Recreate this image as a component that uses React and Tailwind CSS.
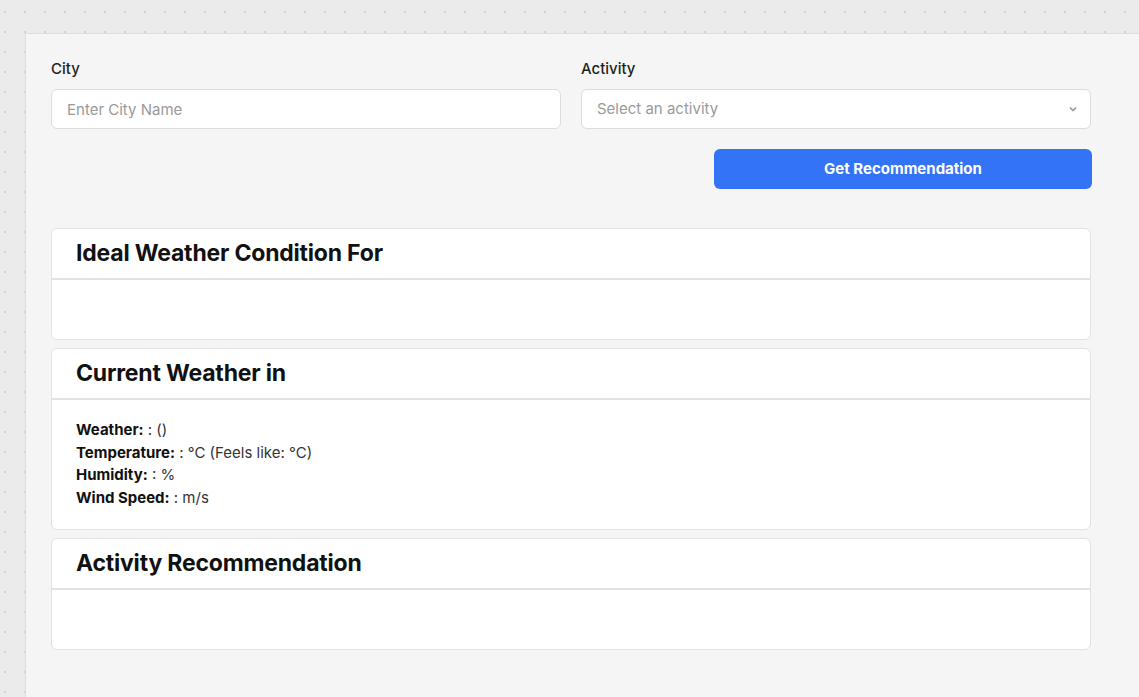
function Field({ label, children }) {
    return (
        <div className="flex flex-col gap-[10px]">
            <label className="text-[15px] font-medium leading-5 text-[#1f1f1f]">{label}</label>
            {children}
        </div>
    );
}

function Card({ title, children }) {
    return (
        <div className="bg-white border border-[#e2e2e2] rounded-md">
            <div className="h-[51px] flex items-center px-6 border-b-2 border-[#e2e2e2]">
                <h2 className="text-[23px] font-bold text-[#111] tracking-[-0.2px]">{title}</h2>
            </div>
            <div className="px-6 pt-[19px] pb-5 min-h-[59px] text-[15px] leading-[22.5px] text-[#333]">{children}</div>
        </div>
    );
}

export default function App() {
    return (
        <div
            className="min-h-[697px] bg-[#ebebeb] bg-[radial-gradient(circle,#d2d2d2_1px,transparent_1.2px)] bg-size-[20px_20px] bg-position-[-5px_2px] pt-[33px] pl-[25px]"
            style={{ fontFamily: "Inter, 'Noto Sans', sans-serif" }}
        >
            <div className="bg-[#f5f5f5] border-t border-l border-[#dedede] min-h-[664px] pt-[25px] pl-[25px]">
                <div className="w-[1041px]">
                    <div className="grid grid-cols-2 gap-5 pr-px">
                        <Field label="City">
                            <input
                                className="h-10 bg-white border border-[#dddddd] rounded-md px-[15px] text-[15px] text-[#333] placeholder:text-[#9a9a9a] outline-none"
                                placeholder="Enter City Name"
                            />
                        </Field>
                        <Field label="Activity">
                            <div className="h-10 bg-white border border-[#dddddd] rounded-md pl-[15px] pr-3 flex items-center justify-between text-[15px] text-[#9a9a9a]">
                                <span>Select an activity</span>
                                <svg width="10" height="10" viewBox="0 0 10 10" fill="none" stroke="#9a9a9a" strokeWidth="1.6">
                                    <path d="M2 3.5 5 6.5 8 3.5" />
                                </svg>
                            </div>
                        </Field>
                    </div>
                    <div className="flex justify-end mt-5">
                        <button className="w-[378px] h-10 bg-[#3373f6] rounded-md text-white text-[15px] font-bold">
                            Get Recommendation
                        </button>
                    </div>
                    <div className="mt-[39px] flex flex-col gap-2 pr-px">
                        <Card title="Ideal Weather Condition For" />
                        <Card title="Current Weather in">
                            <p><b className="text-[#111]">Weather:</b> : ()</p>
                            <p><b className="text-[#111]">Temperature:</b> : °C (Feels like: °C)</p>
                            <p><b className="text-[#111]">Humidity:</b> : %</p>
                            <p><b className="text-[#111]">Wind Speed:</b> : m/s</p>
                        </Card>
                        <Card title="Activity Recommendation" />
                    </div>
                </div>
            </div>
        </div>
    );
}
